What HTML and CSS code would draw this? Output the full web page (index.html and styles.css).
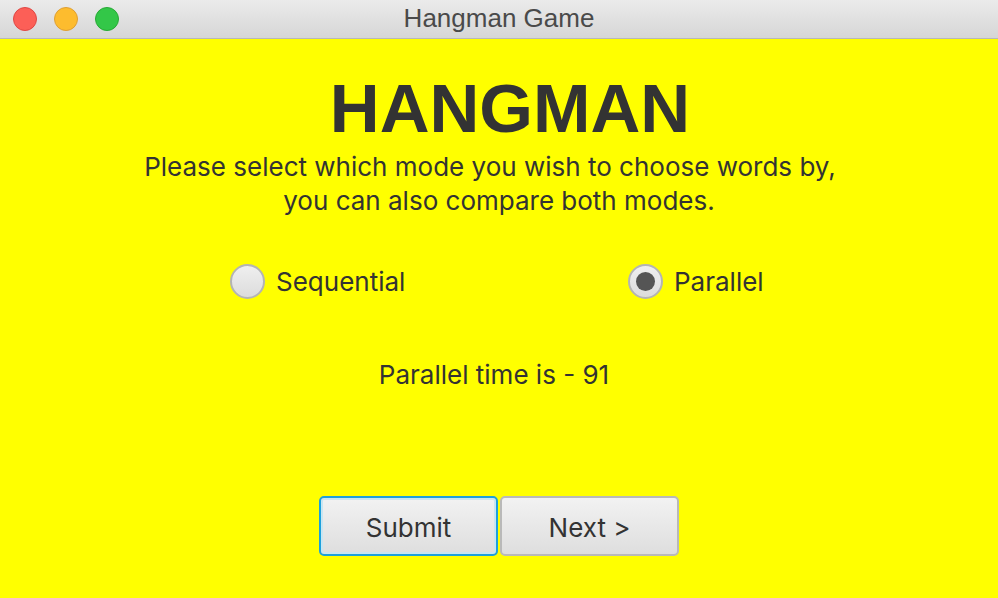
FILE: index.html
```html
<!DOCTYPE html>
<html>
<head>
<meta charset="utf-8">
<link rel="stylesheet" href="styles.css">
<title>Hangman Game</title>
</head>
<body>
<div class="window">
  <div class="titlebar">
    <div class="lights">
      <span class="light red"></span>
      <span class="light yellow"></span>
      <span class="light green"></span>
    </div>
    <div class="title">Hangman Game</div>
  </div>
  <div class="content">
    <h1 class="heading">HANGMAN</h1>
    <p class="intro"><span class="line-one">Please select which mode you wish to choose words by,</span><br>you can also compare both modes.</p>
    <div class="modes">
      <label class="radio first">
        <span class="circle"></span>
        <span class="radio-label">Sequential</span>
      </label>
      <label class="radio">
        <span class="circle checked"><span class="dot"></span></span>
        <span class="radio-label">Parallel</span>
      </label>
    </div>
    <div class="result">Parallel time is - 91</div>
    <div class="buttons">
      <button class="btn focused">Submit</button>
      <button class="btn">Next &gt;</button>
    </div>
  </div>
</div>
</body>
</html>
```

FILE: styles.css
```css
html, body {
  margin: 0;
  padding: 0;
}
body {
  width: 998px;
  height: 598px;
  overflow: hidden;
  background: #ffff00;
  font-family: Inter, "Liberation Sans", sans-serif;
  color: #333333;
}
.window {
  display: flex;
  flex-direction: column;
  height: 598px;
}
.titlebar {
  position: relative;
  height: 38px;
  background: linear-gradient(#ebebeb, #d6d6d6);
  border-bottom: 1px solid #b8b8b8;
  display: flex;
  align-items: center;
  justify-content: center;
}
.lights {
  position: absolute;
  left: 13px;
  top: 7px;
  display: flex;
  gap: 17px;
}
.light {
  width: 24px;
  height: 24px;
  border-radius: 50%;
  box-sizing: border-box;
}
.light.red { background: #fc5f57; border: 1px solid #df4744; }
.light.yellow { background: #fdbc2e; border: 1px solid #de9f34; }
.light.green { background: #33c748; border: 1px solid #27aa35; }
.title {
  font-family: "Liberation Sans", Arial, sans-serif;
  font-size: 26px;
  color: #4a4a4a;
  margin-top: -1px;
}
.content {
  flex: 1;
  display: flex;
  flex-direction: column;
  align-items: center;
}
.heading {
  margin: 38px 0 0 22px;
  font-family: "Liberation Sans", Arial, sans-serif;
  font-weight: bold;
  font-size: 69px;
  line-height: 64px;
  color: #333333;
}
.intro {
  margin: 9px 0 0 0;
  font-size: 26px;
  line-height: 34px;
  text-align: center;
}
.line-one {
  padding-right: 18px;
}
.modes {
  margin-top: 46px;
  align-self: stretch;
  padding-left: 230px;
  display: flex;
}
.radio {
  display: flex;
  align-items: center;
  gap: 11px;
  font-size: 26px;
}
.radio.first {
  width: 398px;
}
.circle {
  width: 35px;
  height: 35px;
  box-sizing: border-box;
  border-radius: 50%;
  border: 2px solid #b4b4b4;
  background: linear-gradient(#efefef, #dcdcdc);
  display: flex;
  align-items: center;
  justify-content: center;
}
.dot {
  width: 19px;
  height: 19px;
  border-radius: 50%;
  background: #555555;
}
.result {
  margin: 61px 10px 0 0;
  font-size: 26px;
  line-height: 30px;
}
.buttons {
  margin-top: 106px;
  display: flex;
  gap: 2px;
}
.btn {
  width: 179px;
  height: 60px;
  box-sizing: border-box;
  border: 2px solid #b9b9b9;
  border-radius: 5px;
  background: linear-gradient(#f2f2f2, #dedede);
  font-family: Inter, "Liberation Sans", sans-serif;
  font-size: 26px;
  color: #333333;
  padding: 2px 0 0 0;
}
.btn.focused {
  border: 2px solid #1ea0dc;
  box-shadow: inset 0 0 0 2px #c9e6f2;
}
```
